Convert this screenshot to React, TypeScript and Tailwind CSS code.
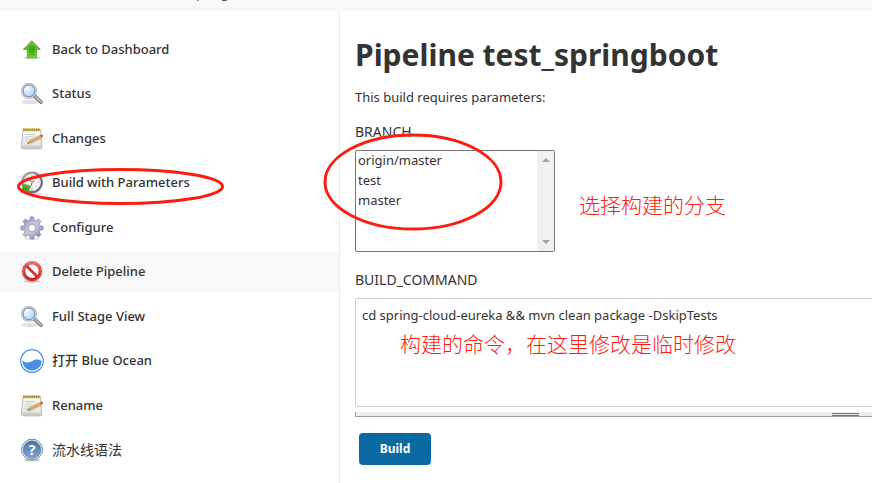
import React from 'react';

const IconDefs: React.FC = () => (
    <svg width="0" height="0" className="absolute" aria-hidden="true">
        <defs>
            <linearGradient id="green" x1="0" y1="0" x2="0" y2="1">
                <stop offset="0" stopColor="#7ccb3f" />
                <stop offset="0.5" stopColor="#3fa310" />
                <stop offset="1" stopColor="#5fd31a" />
            </linearGradient>
            <radialGradient id="lens" cx="0.35" cy="0.35" r="0.8">
                <stop offset="0" stopColor="#f2f8fe" />
                <stop offset="0.6" stopColor="#c3dbf5" />
                <stop offset="1" stopColor="#a3c6ec" />
            </radialGradient>
            <linearGradient id="paper" x1="0" y1="0" x2="0" y2="1">
                <stop offset="0" stopColor="#fafafa" />
                <stop offset="1" stopColor="#e2e2e2" />
            </linearGradient>
            <linearGradient id="rim" x1="0" y1="0" x2="1" y2="1">
                <stop offset="0" stopColor="#a3a3b4" />
                <stop offset="1" stopColor="#5d5d74" />
            </linearGradient>
            <linearGradient id="gear" x1="0" y1="0" x2="1" y2="1">
                <stop offset="0" stopColor="#7f86b0" />
                <stop offset="0.5" stopColor="#c0c3d8" />
                <stop offset="1" stopColor="#7d80a8" />
            </linearGradient>
            <linearGradient id="red" x1="0" y1="0" x2="0" y2="1">
                <stop offset="0" stopColor="#ea6262" />
                <stop offset="1" stopColor="#cc1010" />
            </linearGradient>
            <linearGradient id="help" x1="0" y1="0" x2="0" y2="1">
                <stop offset="0" stopColor="#4a70a8" />
                <stop offset="1" stopColor="#86a6d2" />
            </linearGradient>
        </defs>
    </svg>
);

const Icon: React.FC<{ children: React.ReactNode }> = ({ children }) => (
    <svg viewBox="0 0 24 24" className="size-6 shrink-0" aria-hidden="true">
        {children}
    </svg>
);

const UpIcon = () => (
    <Icon>
        <ellipse cx="12" cy="20" rx="8" ry="1.4" fill="#000" opacity="0.18" />
        <path d="M11.8 2.6 20.3 11.4H16.4V19.6H7.2V11.4H3.3Z" fill="url(#green)" stroke="#4da52b" strokeWidth="0.8" strokeLinejoin="round" />
        <path d="M11.8 4 18.2 10.5H15.4V18.6H8.2V10.5H5.4Z" fill="none" stroke="#a6e36f" strokeWidth="0.6" opacity="0.7" />
    </Icon>
);

const SearchIcon = () => (
    <Icon>
        <ellipse cx="10" cy="20" rx="9" ry="2" fill="#000" opacity="0.12" />
        <path d="M14.4 14 21 20.2" stroke="#858585" strokeWidth="3.8" strokeLinecap="round" />
        <path d="M15.6 14.8 21 19.8" stroke="#bbb" strokeWidth="1.8" strokeLinecap="round" />
        <circle cx="9" cy="8.8" r="7" fill="url(#lens)" stroke="#a2a4a2" strokeWidth="1.8" />
        <circle cx="9" cy="8.8" r="6.8" fill="none" stroke="#e6e8e6" strokeWidth="0.8" />
        <circle cx="9" cy="8.8" r="5.8" fill="none" stroke="#6d94c6" strokeWidth="1" />
        <path d="M5 8.5A4.2 4.2 0 0 1 9.5 4.6" fill="none" stroke="#fff" strokeWidth="1.3" opacity="0.8" />
    </Icon>
);

const NotepadIcon = () => (
    <Icon>
        <ellipse cx="12" cy="21.4" rx="11" ry="1.4" fill="#000" opacity="0.15" />
        <path d="M3 3H20.5L21.8 19.5Q21.8 21 20.6 21H2.6Q1.3 21 1.4 19.5Z" fill="url(#paper)" stroke="#a6a6a0" strokeWidth="0.8" />
        <path d="M2 19.3H21.3" stroke="#bcbcb8" strokeWidth="0.8" />
        <path d="M3 1.4H20.5V4.2H3Z" fill="#d3c04e" />
        <path d="M3.4 2.8H20.2" stroke="#8d7d2a" strokeWidth="2" strokeDasharray="1 1.1" />
        <path d="M5 7.5H16M5 9.8H14M5 12.1H12M5 14.4H9" stroke="#c6c6c6" strokeWidth="0.8" />
        <path d="M9 17.4 21 11.6" stroke="#999" strokeWidth="1.6" opacity="0.3" />
        <path d="M7.5 16.6 10.4 13.3 20.6 8.3 21.7 10.2 11.2 15.3Z" fill="#e5a445" stroke="#a87424" strokeWidth="0.6" />
        <path d="M10.8 13.9 20.8 9.1" stroke="#f7cd7e" strokeWidth="0.7" />
        <path d="M7.5 16.6 8.5 15.4 9.1 16.1Z" fill="#333" />
        <path d="M20.4 8.3 21.8 7.6Q23.4 8 22.9 9.6L21.6 10.2Z" fill="#d83d2f" />
    </Icon>
);

const ClockIcon = () => (
    <Icon>
        <ellipse cx="14" cy="22.4" rx="9" ry="1.4" fill="#000" opacity="0.15" />
        <circle cx="12" cy="11.3" r="9.8" fill="#f5f5f1" stroke="url(#rim)" strokeWidth="2.2" />
        <circle cx="12" cy="11.3" r="8.3" fill="none" stroke="#c9c9c3" strokeWidth="0.6" />
        <path d="M12 4V5.6M12 17V18.6M17.7 11.3H19.3M4.7 11.3H6.3M16.8 6.5 15.9 7.4M7.2 6.5 8.1 7.4M16.8 16.1 15.9 15.2" stroke="#999" strokeWidth="0.8" />
        <path d="M9.6 7.5Q12 4.6 14.3 7.4" fill="none" stroke="#d9b437" strokeWidth="1.4" />
        <path d="M9.2 8.3 12 11.3 14.6 9.4M12 11.3 11.4 14.5" fill="none" stroke="#555" strokeWidth="0.9" />
        <path d="M1 22.2Q.4 17.6 4.3 15.7L3.4 12.8 10.8 15.3 7 21.6 5.9 18.9Q2.6 19.4 1 22.2Z" fill="url(#green)" stroke="#36911a" strokeWidth="0.6" />
    </Icon>
);

const GearIcon = () => (
    <Icon>
        <ellipse cx="12" cy="22.6" rx="8" ry="1.2" fill="#000" opacity="0.12" />
        <path
            d="M10.3.8H13.7L14.2 4 16.1 4.8 18.7 2.9 21.1 5.3 19.2 7.9 20 9.8 23.2 10.3V13.7L20 14.2 19.2 16.1 21.1 18.7 18.7 21.1 16.1 19.2 14.2 20 13.7 23.2H10.3L9.8 20 7.9 19.2 5.3 21.1 2.9 18.7 4.8 16.1 4 14.2.8 13.7V10.3L4 9.8 4.8 7.9 2.9 5.3 5.3 2.9 7.9 4.8 9.8 4ZM12 8.4A3.6 3.6 0 1 0 12 15.6 3.6 3.6 0 1 0 12 8.4Z"
            fill="url(#gear)"
            fillRule="evenodd"
            stroke="#777ca3"
            strokeWidth="0.5"
            strokeLinejoin="round"
        />
        <circle cx="12" cy="12" r="5.6" fill="none" stroke="#d3d6e4" strokeWidth="1" opacity="0.7" />
    </Icon>
);

const StopIcon = () => (
    <Icon>
        <ellipse cx="12" cy="21.2" rx="8" ry="1.5" fill="#000" opacity="0.2" />
        <circle cx="12" cy="11.3" r="8.3" fill="#fff" stroke="url(#red)" strokeWidth="3.2" />
        <path d="M6.3 5.8 17.6 17" stroke="#d63333" strokeWidth="2.8" />
        <circle cx="12" cy="11.3" r="9.9" fill="none" stroke="#c02424" strokeWidth="0.5" />
        <circle cx="12" cy="11.3" r="9" fill="none" stroke="#f19a9a" strokeWidth="0.6" opacity="0.7" />
    </Icon>
);

const OceanIcon = () => (
    <Icon>
        <circle cx="12" cy="12" r="11.3" fill="#fff" stroke="#4a90e2" strokeWidth="1.2" />
        <path d="M2.2 11.6Q5 13.8 8 13.6C11.5 13.4 13 10.6 16.5 10.6Q19.5 10.6 21.8 11.9A9.8 9.8 0 0 1 2.2 11.6Z" fill="#4a90e2" />
    </Icon>
);

const HelpIcon = () => (
    <Icon>
        <ellipse cx="12" cy="22" rx="8" ry="1.4" fill="#000" opacity="0.2" />
        <circle cx="12" cy="11.6" r="10.4" fill="#fff" stroke="#5f82b6" strokeWidth="1" />
        <circle cx="12" cy="11.6" r="8.8" fill="url(#help)" stroke="#3f639b" strokeWidth="0.6" />
        <text x="12" y="16.8" textAnchor="middle" fontSize="15" fontWeight="700" fill="#fff" fontFamily="Open Sans, sans-serif">
            ?
        </text>
    </Icon>
);

const Circled: React.FC<{ className: string; rx: number; ry: number }> = ({ className, rx, ry }) => (
    <svg className={`pointer-events-none absolute ${className}`} aria-hidden="true">
        <ellipse cx="50%" cy="50%" rx={rx} ry={ry} fill="none" stroke="#fc1d10" strokeWidth="3" />
    </svg>
);

const tasks = [
    { label: 'Back to Dashboard', icon: UpIcon },
    { label: 'Status', icon: SearchIcon },
    { label: 'Changes', icon: NotepadIcon },
    { label: 'Build with Parameters', icon: ClockIcon, circled: true },
    { label: 'Configure', icon: GearIcon },
    { label: 'Delete Pipeline', icon: StopIcon, active: true },
    { label: 'Full Stage View', icon: SearchIcon },
    { label: '打开 Blue Ocean', icon: OceanIcon },
    { label: 'Rename', icon: NotepadIcon },
    { label: '流水线语法', icon: HelpIcon, zh: true },
];

const branches = ['origin/master', 'test', 'master'];

const App: React.FC = () => {
    return (
        <div className="flex min-h-screen flex-col overflow-hidden bg-white font-['Noto_Sans','Noto_Sans_CJK_SC',sans-serif] text-[13px] text-[#333]">
            <IconDefs />

            {/* Breadcrumb bar, scrolled almost out of view */}
            <nav className="flex h-[11px] items-end overflow-hidden bg-[#f8f8f8] pb-2 pl-[161px] leading-5 text-[#4d545d]">
                <a href="#job">test_springboot</a>
            </nav>

            <div className="flex flex-1">
                {/* Side panel */}
                <aside className="w-[340px] shrink-0 border-r border-[#ebebeb] pt-[19px]">
                    <ul>
                        {tasks.map(({ label, icon: TaskIcon, active, circled, zh }) => (
                            <li key={label} className="relative odd:mb-1 even:mb-[5px]">
                                <a
                                    href="#task"
                                    className={`flex h-10 items-center gap-2 pl-5 ${zh ? 'text-sm' : 'font-medium'} ${active ? 'bg-[#f8f8f8]' : 'hover:bg-[#f8f8f8]'}`}
                                >
                                    <TaskIcon />
                                    {label}
                                </a>
                                {circled && <Circled className="top-1 left-4 h-[39px] w-[209px]" rx={102} ry={17} />}
                            </li>
                        ))}
                    </ul>
                </aside>

                {/* Build form */}
                <main className="min-w-0 flex-1 pt-5 pl-[15px]">
                    <h1 className="text-[30px] leading-12 font-bold whitespace-nowrap">Pipeline test_springboot</h1>
                    <p className="mt-2 leading-5">This build requires parameters:</p>

                    <form className="w-full min-w-[980px]" onSubmit={(e) => e.preventDefault()}>
                        <label htmlFor="branch" className="mt-[15px] block text-sm leading-5">
                            BRANCH
                        </label>
                        <div className="relative mt-2 flex h-[102px] w-[200px] rounded-xs border border-[#767676]">
                            <select id="branch" multiple size={5} className="min-w-0 flex-1 overflow-hidden outline-none">
                                {branches.map((name) => (
                                    <option key={name} className="h-5 px-0.5 py-0 leading-5">
                                        {name}
                                    </option>
                                ))}
                            </select>
                            <div className="flex w-[17px] flex-col items-center justify-between bg-[#f1f1f1] py-[7px]">
                                <svg viewBox="0 0 8 4" className="h-1 w-2">
                                    <path d="M0 4 4 0 8 4Z" fill="#a3a3a3" />
                                </svg>
                                <svg viewBox="0 0 8 4" className="h-1 w-2">
                                    <path d="M0 0 4 4 8 0Z" fill="#a3a3a3" />
                                </svg>
                            </div>
                            <Circled className="-top-[18px] -left-[33px] h-[98px] w-[180px]" rx={88} ry={47} />
                            <span className="absolute top-10 left-[223px] text-[21px] leading-7 font-light whitespace-nowrap text-[#fc1d10]">
                                选择构建的分支
                            </span>
                        </div>

                        <label htmlFor="command" className="mt-[18px] block text-sm leading-5">
                            BUILD_COMMAND
                        </label>
                        <div className="relative mt-2">
                            <textarea
                                id="command"
                                defaultValue="cd spring-cloud-eureka && mvn clean package -DskipTests"
                                className="block h-[109px] w-full resize-none rounded-xs border border-[#ccc] px-1.5 py-1.5 leading-5 outline-none"
                            />
                            <span className="absolute top-8 left-[45px] text-[21px] leading-7 font-light whitespace-nowrap text-[#fc1d10]">
                                构建的命令，在这里修改是临时修改
                            </span>
                        </div>
                        <div className="mt-[5px] flex h-[5px] justify-center border-b border-l border-[#97a1a9] bg-[#e9eef0]">
                            <div className="mt-px h-[3px] w-[27px] border-y border-[#777]" />
                        </div>

                        <button
                            type="submit"
                            className="mt-4 ml-1 h-8 w-[72px] rounded-sm bg-[#0b6aa2] text-xs font-bold text-white"
                        >
                            Build
                        </button>
                    </form>
                </main>
            </div>
        </div>
    );
};

export default App;
